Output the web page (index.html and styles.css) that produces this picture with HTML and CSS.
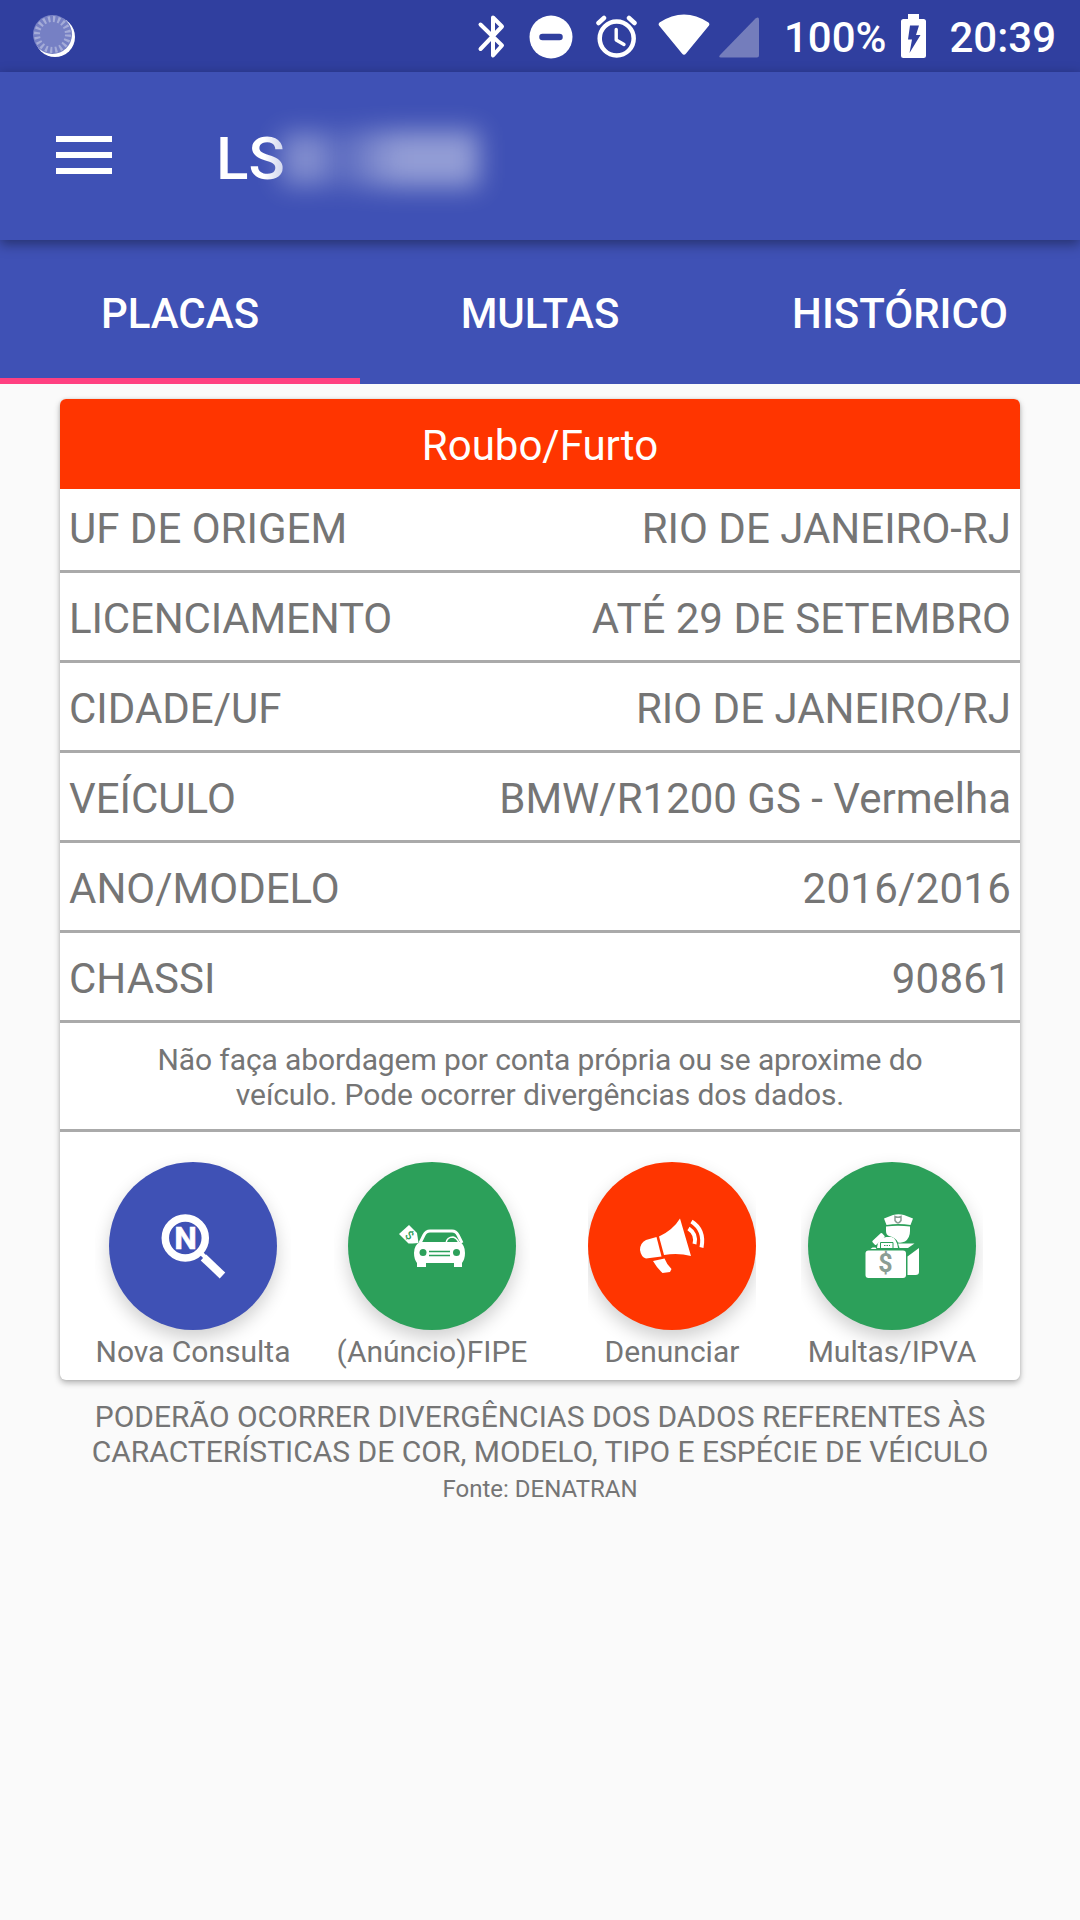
FILE: index.html
```html
<!DOCTYPE html>
<html lang="pt-BR">
<head>
<meta charset="utf-8">
<title>Placas</title>
<link rel="stylesheet" href="styles.css">
</head>
<body>
<header class="status">
  <svg class="sync" width="46" height="46" viewBox="31 13 46 46">
    <circle cx="55" cy="37" r="20" fill="#fff"/>
    <circle cx="52.500" cy="34.500" r="19.500" fill="#7680c4"/>
    <circle cx="52.500" cy="34.500" r="15.500" fill="none" stroke="#a5acd8" stroke-width="6" stroke-dasharray="2.2 2.669"/>
  </svg>
  <svg class="bt" width="28" height="44" viewBox="477 15 28 44" fill="none" stroke="#fff" stroke-width="4" stroke-linejoin="round" stroke-linecap="round"><path d="M480.500 24.500L502 45.500L493 55.500V17.500L502 26.500L480.500 49"/></svg>
  <svg class="dnd" width="44" height="44" viewBox="529.500 14.500 44 44"><circle cx="551.500" cy="36.500" r="21.500" fill="#fff"/><path d="M543 36.500h17" stroke="#303f9f" stroke-width="6.500" stroke-linecap="round"/></svg>
  <svg class="alarm" width="42" height="44" viewBox="596 15 42 44" fill="none" stroke="#fff" stroke-linecap="round"><circle cx="616.700" cy="38.500" r="17" stroke-width="4.500"/><path d="M616.200 29.500V40L624 44.500" stroke-width="3.400" stroke-linejoin="round"/><path d="M598.500 23L604 18M629 18L634.500 23" stroke-width="4.500"/></svg>
  <svg class="wifi" width="52" height="42" viewBox="658.500 14 52 42"><path d="M660 22.500Q684.500 6.500 709 22.500Q710.500 24 709.500 25.500L686.500 53.500Q684.500 56 682.500 53.500L659.500 25.500Q658.500 24 660 22.500Z" fill="#fff"/></svg>
  <svg class="signal" width="40" height="41" viewBox="719 16.500 40 41"><path d="M720 54.500L755.500 18Q759 15.500 759 19V55Q759 57 757 57H721Q718 57 720 54.500Z" fill="#747dbc"/></svg>
  <span class="pct">100%</span>
  <svg class="battery" width="25" height="44" viewBox="901 14 25 44"><path d="M908 14h11v5h4.500q2.500 0 2.500 2.500v34q0 2.500-2.500 2.500h-20q-2.500 0-2.500-2.500v-34q0-2.500 2.500-2.500H908Z" fill="#fff"/><path d="M910 25.500h9L916 35h4.500L909.500 53L912 39.500H908Z" fill="#303f9f"/></svg>
  <span class="clock">20:39</span>
</header>
<div class="toolbar">
  <span class="menu"><i></i><i></i><i></i></span>
  <h1 class="title">LS</h1>
  <span class="hidden-plate"><b class="blob-a"></b><b class="blob-b"></b></span>
</div>
<nav class="tabs">
  <a class="tab active">PLACAS</a>
  <a class="tab">MULTAS</a>
  <a class="tab">HISTÓRICO</a>
</nav>
<main>
  <section class="card">
    <h2 class="alert">Roubo/Furto</h2>
    <div class="row first"><span>UF DE ORIGEM</span><span>RIO DE JANEIRO-RJ</span></div>
    <div class="row"><span class="tight">LICENCIAMENTO</span><span>ATÉ 29 DE SETEMBRO</span></div>
    <div class="row"><span>CIDADE/UF</span><span>RIO DE JANEIRO/RJ</span></div>
    <div class="row"><span>VEÍCULO</span><span>BMW/R1200 GS - Vermelha</span></div>
    <div class="row"><span>ANO/MODELO</span><span class="digits">2016/2016</span></div>
    <div class="row"><span>CHASSI</span><span class="digits">90861</span></div>
    <p class="note">Não faça abordagem por conta própria ou se aproxime do<br>veículo. Pode ocorrer divergências dos dados.</p>
    <div class="actions">
      <div class="action wide">
        <span class="fab blue"><svg width="168" height="168" viewBox="109 1162 168 168"><circle cx="185.300" cy="1238" r="20" fill="none" stroke="#fff" stroke-width="7.500"/><path d="M203.500 1257.500l19 18" stroke="#fff" stroke-width="8"/><path d="M199 1251l8 8" stroke="#fff" stroke-width="4"/><text x="185.500" y="1248.700" text-anchor="middle" class="letter">N</text></svg></span>
        <span>Nova Consulta</span>
      </div>
      <div class="action wide">
        <span class="fab green"><svg width="168" height="168" viewBox="348 1162 168 168">
          <path d="M399 1234l10-9 8 8 1.500 10-6 0.500-4 0z" fill="#fff"/><text transform="translate(409.500 1235.500) rotate(40)" y="4" text-anchor="middle" class="tag">$</text>
          <path d="M420 1243l4-8q2-4 6-4h22q4 0 6 4l4 8" fill="none" stroke="#fff" stroke-width="3"/><path d="M446 1243q1-6 7-6q4 1 6 6" fill="none" stroke="#fff" stroke-width="1.500"/>
          <path d="M420 1242h40q5 3 5 11q0 6-3 10v4h-8v-4h-28v4h-9v-4q-3-4-3-10q0-8 6-11Z" fill="#fff"/>
          <circle cx="423" cy="1252.500" r="3.500" fill="#2ca05a"/><circle cx="456.500" cy="1252.500" r="3.500" fill="#2ca05a"/><path d="M429 1251.500h21M429 1255.500h21" stroke="#2ca05a" stroke-width="1.300"/></svg></span>
        <span>(Anúncio)FIPE</span>
      </div>
      <div class="action narrow">
        <span class="fab red"><svg width="168" height="168" viewBox="588 1162 168 168" fill="#fff">
          <path d="M656.500 1237L661.500 1256.500L646 1258.500Q641 1257 640 1250Q640 1243 646 1240Z"/><path d="M659 1236.500Q673 1230 680 1218.500L691 1256Q678 1252.500 664 1255Z"/><path d="M653 1261L664.500 1258.500Q667 1265 671.500 1269L670 1272L662.500 1273Q657 1268 653 1261Z"/>
          <path d="M688.500 1228.500Q697 1234 694.500 1244M691.500 1221.500Q705 1230 701.500 1247.500" fill="none" stroke="#fff" stroke-width="4"/></svg></span>
        <span>Denunciar</span>
      </div>
      <div class="action mid">
        <span class="fab green"><svg width="168" height="168" viewBox="808 1162 168 168" fill="#fff">
          <path d="M884 1218.500l9-3.500q5.500-1.500 11 0l9 3.500-2.500 6.500q-12-2-24 0Z"/>
          <path d="M886 1226.500q12-1.500 24 0v4.500q0 7-5 10.500q-3 1.500-7 1q-2-5-9-6.500q-3-1-3-5Z"/>
          <path d="M895 1216.500q3 1.500 6 0v4q-3 5-6 0Z" fill="none" stroke="#8b9d94" stroke-width="1.500"/>
          <rect x="-6.500" y="-2.700" width="13" height="5.400" rx="1" transform="translate(878.500 1239) rotate(-43)"/>
          <path d="M877 1248q.5-6 3.500-8q2.500-3 6-3h5q5 1 6.500 11Z"/>
          <path d="M880.500 1248v-5.500h12.500v5.500" fill="none" stroke="#2ca05a" stroke-width="1"/>
          <path d="M884 1245.500h6" stroke="#2ca05a" stroke-width="1" stroke-dasharray="1.500 1"/>
          <path d="M870.500 1249l2-1.500h3l1 1.500Z"/>
          <path d="M898 1243.500h16.500l-6.500 4.500h-8.500Z"/>
          <path d="M907.500 1256.500l11.500-8.500v24q0 3-3.500 3h-8Z"/><rect x="865.500" y="1250.500" width="40.500" height="27.500" rx="3"/><text x="885.500" y="1271.500" text-anchor="middle" class="money">$</text></svg></span>
        <span>Multas/IPVA</span>
      </div>
    </div>
  </section>
  <p class="disclaimer">PODERÃO OCORRER DIVERGÊNCIAS DOS DADOS REFERENTES ÀS<br>CARACTERÍSTICAS DE COR, MODELO, TIPO E ESPÉCIE DE VÉICULO</p>
  <p class="source">Fonte: DENATRAN</p>
</main>
</body>
</html>
```
FILE: styles.css
```css
* { box-sizing: border-box; margin: 0; padding: 0; }
body { width: 1080px; height: 1920px; overflow: hidden; background: #fafafa; color: #757575; font-family: Roboto, sans-serif; font-size: 42px; font-weight: 400; }
svg { display: block; flex: none; }

.status { height: 72px; background: #303f9f; color: #fff; display: flex; align-items: flex-start; padding: 13px 24px 0 31px; font-size: 42px; font-weight: 500; line-height: 50px; }
.sync { margin-right: auto; }
.bt { margin: 2px 24.5px 0 0; }
.dnd { margin: 1.5px 22.5px 0 0; }
.alarm { margin: 2px 20.5px 0 0; }
.wifi { margin: 1px 8.5px 0 0; }
.signal { margin: 3.5px 25px 0 0; }
.battery { margin: 1px 23px 0 15px; }

.toolbar { position: relative; height: 168px; background: #3f51b5; color: #fff; display: flex; align-items: center; padding-left: 56px; box-shadow: 0 4px 12px rgba(0, 0, 0, .4); }
.menu { display: flex; flex-direction: column; gap: 10px; width: 56px; margin: 0 104px 2px 0; }
.menu i { height: 6px; background: #fff; }
.title { font-size: 60px; font-weight: 500; line-height: 70px; padding-top: 5px; background: linear-gradient(90deg, #fff 70%, #c5cbe9); background-clip: text; -webkit-background-clip: text; color: transparent; }
.hidden-plate { display: flex; align-items: center; height: 60px; margin: 5px 0 0 -4px; filter: blur(13px); }
.blob-a { width: 48px; height: 52px; background: rgba(255, 255, 255, .34); }
.blob-b { width: 150px; height: 56px; background: linear-gradient(90deg, rgba(255, 255, 255, .08), rgba(255, 255, 255, .44) 45%); }

.tabs { height: 144px; background: #3f51b5; color: #fff; display: flex; }
.tab { flex: 1; display: flex; align-items: center; justify-content: center; padding-top: 9px; font-weight: 500; border-bottom: 6px solid #3f51b5; }
.tab.active { border-color: #ff4081; }

main { padding: 15px 60px 0; }
.card { height: 981px; background: #fff; border-radius: 6px; overflow: hidden; box-shadow: 0 3px 6px rgba(0, 0, 0, .28), 0 0 3px rgba(0, 0, 0, .12); }
.alert { height: 90px; background: #ff3500; color: #fff; font-size: 42px; font-weight: 400; display: flex; align-items: center; justify-content: center; padding-top: 3px; }
.row { height: 90px; border-bottom: 3px solid #aaa; display: flex; align-items: center; justify-content: space-between; padding: 4px 9px 0; }
.row.first { height: 84px; padding: 0 9px 2px; }
.tight { letter-spacing: -.15px; }
.digits { letter-spacing: .25px; }
.note { height: 109px; border-bottom: 3px solid #aaa; padding-top: 19px; font-size: 30px; line-height: 35px; text-align: center; letter-spacing: -.1px; }
.actions { display: grid; grid-template-columns: 240px 238px 242px 198px; padding: 0 0 0 13px; justify-items: center; font-size: 30px; line-height: 35px; }
.action { display: flex; flex-direction: column; align-items: center; gap: 4px; padding-top: 30px; height: 248px; overflow: hidden; white-space: nowrap; }
.wide { width: 196px; }
.narrow { width: 168px; }
.mid { width: 182px; }
.fab { width: 168px; height: 168px; flex: none; border-radius: 50%; box-shadow: 0 8px 18px rgba(0, 0, 0, .19); }
.fab + span { position: relative; }
.blue { background: #3f51b5; }
.green { background: #2ca05a; }
.red { background: #ff3500; }
.letter { font: 700 32px Roboto, sans-serif; fill: #fff; stroke: #fff; stroke-width: .6px; }
.tag { font: 500 12px Roboto, sans-serif; fill: #2ca05a; }
.money { font: 700 25px Roboto, sans-serif; fill: #8b9d94; }
.disclaimer { margin: 19px -40px 0; text-align: center; font-size: 30px; line-height: 35px; }
.source { text-align: center; font-size: 24px; line-height: 28px; margin-top: 6px; }
```
